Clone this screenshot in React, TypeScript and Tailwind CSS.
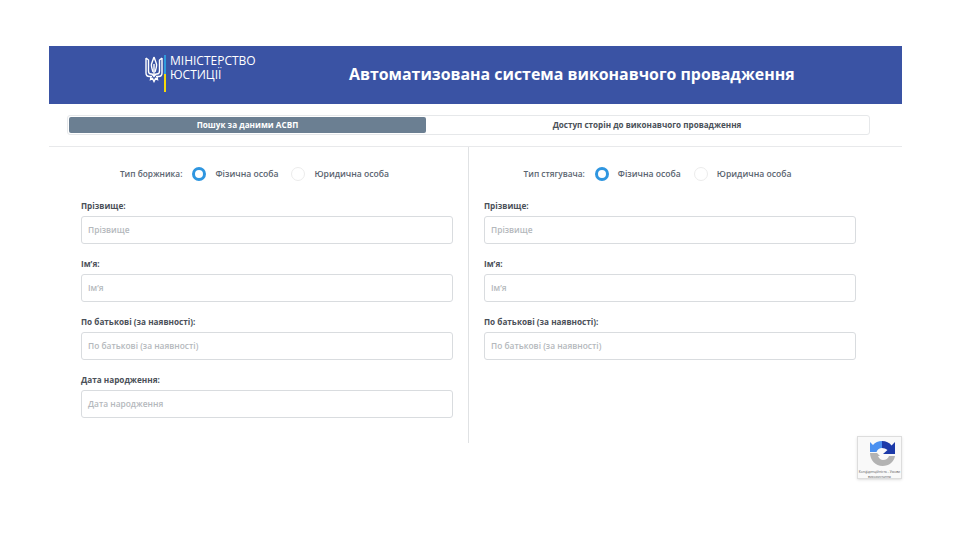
import React from "react";

const font = { fontFamily: '"Open Sans", "Noto Sans", sans-serif' };

function Trident() {
  return (
    <svg width="18" height="27" viewBox="0 0 18 27" fill="none" stroke="#fff" strokeWidth="1.400">
      <path d="M1 2l2.500 2v11c0 2 1 3 2.500 3h1.500M1 2v15c0 2 1.500 3.500 3.500 3.500h2.500" />
      <path d="M17 2l-2.500 2v11c0 2-1 3-2.500 3h-1.500M17 2v15c0 2-1.500 3.500-3.500 3.500H11" />
      <path d="M9 1l-2.500 7c-.5 2 .5 5 1.500 8M9 1l2.500 7c.5 2-.5 5-1.500 8" />
      <path d="M9 8v11M6 20.500l-.5 3 2-1 1.500 3 1.500-3 2 1-.5-3M7 18l2 2.500 2-2.500" />
    </svg>
  );
}

function Radio({ on, label }: { on?: boolean; label: string }) {
  return (
    <div className="flex items-center gap-[9px]">
      <span
        className={
          on
            ? "w-[14px] h-[14px] rounded-full border-[3px] border-[#2f96e0] bg-white"
            : "w-[14px] h-[14px] rounded-full border border-[#ececec] bg-white"
        }
      />
      <span className="text-[8.6px] font-semibold text-[#5a6470]">{label}</span>
    </div>
  );
}

function Field({ label }: { label: string }) {
  return (
    <div className="flex flex-col">
      <label className="h-[13px] mb-[4px] text-[8.2px] leading-[13px] font-bold text-[#4a5058]">{label}:</label>
      <div className="h-[28px] flex items-center px-[6px] rounded-[3px] border border-[#d9dcdf] bg-white text-[8.4px] font-semibold text-[#b4b8bc]">
        {label}
      </div>
    </div>
  );
}

function Column({ title, fields, className, offset }: { title: string; fields: string[]; className: string; offset: string }) {
  return (
    <div className={className}>
      <div className={`h-[14px] mt-[20px] mb-[18px] flex items-center justify-center gap-[13px] ${offset}`}>
        <span className="text-[8.3px] font-semibold text-[#5a6470] -mr-[3px]">{title}:</span>
        <Radio on label="Фізична особа" />
        <Radio label="Юридична особа" />
      </div>
      <div className="flex flex-col gap-[13px]">
        {fields.map((f) => (
          <Field key={f} label={f} />
        ))}
      </div>
    </div>
  );
}

export default function App() {
  return (
    <div className="relative w-[960px] h-[540px] bg-white overflow-hidden" style={font}>
      <div className="ml-[49px] pt-[46px] w-[853px]">
        <header className="h-[58px] bg-[#3a53a4] flex text-white">
          <div className="w-[300px] flex items-start pl-[96px] pt-[9px]">
            <div className="mt-[1px]"><Trident /></div>
            <div className="ml-[1px] w-[2px] h-[37px] bg-gradient-to-b from-[#2f9bdc] from-50% to-[#f5d90a] to-50%" />
            <div className="ml-[4px] -mt-[1px] text-[12px] leading-[14px] font-medium">
              <div>МІНІСТЕРСТВО</div>
              <div>ЮСТИЦІЇ</div>
            </div>
          </div>
          <h1 className="h-full flex items-center text-[15.9px] font-bold whitespace-nowrap">
            Автоматизована система виконавчого провадження
          </h1>
        </header>

        <div className="mt-[11px] ml-[18px] w-[803px] h-[20px] p-[1px] flex rounded-[3px] border border-[#e6e8ea]">
          <div className="w-[357px] flex items-center justify-center rounded-[2px] bg-[#6b7f92] text-[8.200px] font-bold text-white">
            Пошук за даними АСВП
          </div>
          <div className="flex-1 flex items-center justify-center text-[8.100px] font-bold text-[#4a5058]">
            Доступ сторін до виконавчого провадження
          </div>
        </div>

        <div className="mt-[11px] h-[297px] border-t border-[#e8e9eb] flex">
          <Column
            title="Тип боржника"
            offset="pr-[25px]"
            className="w-[420px] pl-[32px] pr-[15px] border-r border-[#e0e2e4]"
            fields={["Прізвище", "Ім’я", "По батькові (за наявності)", "Дата народження"]}
          />
          <Column
            title="Тип стягувача"
            offset="pr-[25px]"
            className="w-[404px] pl-[15px] pr-[17px]"
            fields={["Прізвище", "Ім’я", "По батькові (за наявності)"]}
          />
        </div>
      </div>

      <div className="absolute left-[857px] top-[436px] w-[45px] h-[43px] bg-[#f9f9f9] border border-[#dddddd] shadow-sm flex flex-col items-center overflow-hidden">
        <svg width="27" height="27" viewBox="0 0 27 27" className="mt-[3px] ml-[6px] shrink-0">
          <path d="M1 12 L1 2 L4 5 C6 2.500 9.500 1 13 1 L13 8 C10.500 8 8.500 9.500 7.500 12 Z" fill="#4a90f0" />
          <path d="M13 1 C17 1 20.500 2.500 22.500 5.500 L26 2 L26 14 L14 14 L18.500 10 C17 8.800 15 8 13 8 Z" fill="#1c3aa9" />
          <path d="M1 13 L8 13 L11 16 L9 16 C10 18.500 12 20 14 20 C17 20 19 18.500 20 16 L26 16 C25 22 20 26 13.500 26 C6.500 26 1 20 1 13 Z" fill="#b3b3b3" />
        </svg>
        <div className="mt-[2px] leading-[5px] text-center text-[#555] whitespace-nowrap text-[3.300px]">
          Конфіденційність - Умови
          <br />
          використання
        </div>
      </div>
    </div>
  );
}
